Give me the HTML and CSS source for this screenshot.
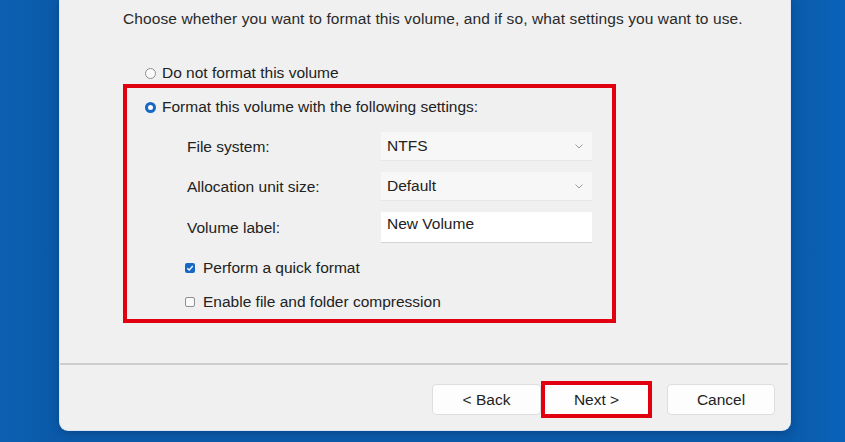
FILE: index.html
```html
<!doctype html>
<html>

<head>
    <meta charset="utf-8" />
    <meta name="viewport" content="width=device-width, initial-scale=1.0">
    <link rel="stylesheet" href="styles.css">
</head>

<body>

    <div class="desktop">

        <div class="dialog">

            <div class="content">
                <div class="intro">Choose whether you want to format this volume, and if so, what settings you want to use.</div>

                <div class="option">
                    <span class="radio"></span>
                    <span>Do not format this volume</span>
                </div>

                <div class="format-box">
                    <div class="option selected">
                        <span class="radio"></span>
                        <span>Format this volume with the following settings:</span>
                    </div>

                    <div class="fields">
                        <div class="label">File system:</div>
                        <div class="select">
                            <span>NTFS</span>
                            <svg class="chevron" width="8" height="5" viewBox="0 0 8 5">
                                <path d="M0.5 0.5 L4 4 L7.5 0.5" fill="none" stroke="#9a9a9a" stroke-width="1" />
                            </svg>
                        </div>

                        <div class="label">Allocation unit size:</div>
                        <div class="select">
                            <span>Default</span>
                            <svg class="chevron" width="8" height="5" viewBox="0 0 8 5">
                                <path d="M0.5 0.5 L4 4 L7.5 0.5" fill="none" stroke="#9a9a9a" stroke-width="1" />
                            </svg>
                        </div>

                        <div class="label">Volume label:</div>
                        <div class="textbox">New Volume</div>
                    </div>

                    <div class="check-row">
                        <span class="checkbox checked">
                            <svg width="8" height="8" viewBox="0 0 8 8">
                                <path d="M1.3 4.2 L3.2 6 L6.8 2" fill="none" stroke="#fff" stroke-width="1.3" />
                            </svg>
                        </span>
                        <span>Perform a quick format</span>
                    </div>
                    <div class="check-row">
                        <span class="checkbox"></span>
                        <span>Enable file and folder compression</span>
                    </div>
                </div>
            </div>

            <div class="separator"></div>

            <div class="footer">
                <button class="btn">&lt; Back</button>
                <button class="btn next">Next &gt;</button>
                <button class="btn cancel">Cancel</button>
            </div>

        </div>

    </div>

</body>

</html>
```

FILE: styles.css
```css
html,
body {
    margin: 0;
    height: 100%;
    font-family: "Liberation Sans", Arial, Helvetica, sans-serif;
    overflow: hidden;
}

.desktop {
    height: 100%;
    background: linear-gradient(90deg, #0c60b3 0%, #0a5aa9 6%, #0a5aa9 93%, #0a63b9 100%);
}

.dialog {
    margin-left: 60px;
    width: 730px;
    height: 430px;
    display: flex;
    flex-direction: column;
    background-color: #f0f0f0;
    border-radius: 0 0 8px 8px;
    box-shadow: 0 0 0 1px #d9e6f2, 0 2px 10px rgba(0, 20, 60, 0.35);
    color: #222;
    font-size: 15.5px;
}

.dialog .content {
    flex-grow: 1;
    padding: 10px 0 0 63px;
}

.dialog .intro {
    line-height: 18px;
    letter-spacing: 0.1px;
    color: #2a2a2a;
}

/* radio buttons */

.option {
    display: flex;
    align-items: center;
    gap: 6px;
    height: 18px;
    line-height: 18px;
}

.content > .option {
    margin: 36px 0 0 22px;
}

.radio {
    width: 11px;
    height: 11px;
    box-sizing: border-box;
    border: 1px solid #8e8e8e;
    border-radius: 50%;
    background-color: #fafafa;
    display: flex;
    justify-content: center;
    align-items: center;
}

.option.selected .radio {
    border: none;
    background-color: #1767c6;
}

.option.selected .radio:after {
    content: '';
    width: 5px;
    height: 5px;
    border-radius: 50%;
    background-color: white;
}

/* settings group */

.format-box {
    margin-top: 2px;
    width: 493px;
    height: 239px;
    box-sizing: border-box;
    border: 4px solid #e1000f;
    padding: 10px 0 0 18px;
}

.fields {
    margin: 16px 0 0 42px;
    display: grid;
    grid-template-columns: 194px 211px;
    grid-template-rows: 29px 29px 31px;
    row-gap: 11px;
    align-items: center;
}

.select,
.textbox {
    height: 100%;
    box-sizing: border-box;
    display: flex;
    align-items: center;
    padding-left: 6px;
}

.select {
    justify-content: space-between;
    padding-right: 9px;
    background-color: #f7f7f7;
    border-bottom: 1px solid #e6e6e6;
}

.textbox {
    padding-bottom: 6px;
    background-color: white;
    border-bottom: 1px solid #d4d4d4;
}

/* checkboxes */

.check-row {
    margin: 16px 0 0 40px;
    display: flex;
    align-items: center;
    gap: 8px;
    height: 18px;
    line-height: 18px;
}

.check-row + .check-row {
    margin-top: 16px;
}

.checkbox {
    width: 10px;
    height: 10px;
    box-sizing: border-box;
    border: 1px solid #8e8e8e;
    border-radius: 2px;
    background-color: #fafafa;
    display: flex;
    justify-content: center;
    align-items: center;
}

.checkbox.checked {
    border: none;
    background-color: #1767c6;
}

/* bottom bar */

.separator {
    height: 2px;
    margin-right: 2px;
    background-color: #cdcdcd;
}

.footer {
    height: 65px;
    box-sizing: border-box;
    padding: 4px 15px 0 0;
    display: flex;
    justify-content: flex-end;
    align-items: center;
}

.btn {
    width: 109px;
    height: 31px;
    font-family: inherit;
    font-size: 15.5px;
    color: #222;
    background-color: #fdfdfd;
    border: 1px solid #dedede;
    border-radius: 4px;
}

.btn.next {
    width: 111px;
    height: 37px;
    border: 4px solid #e1000f;
    border-radius: 0;
    background-color: #fefefe;
}

.btn.cancel {
    width: 108px;
    margin-left: 15px;
}
```
